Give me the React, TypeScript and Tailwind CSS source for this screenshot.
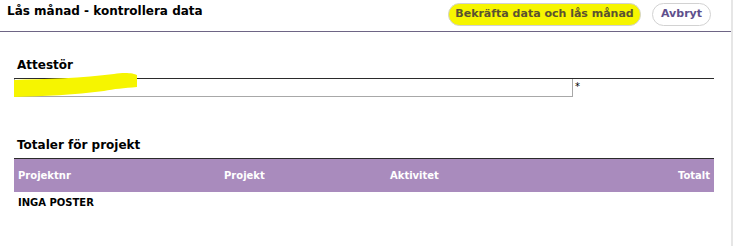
import React from "react";

const FONT = { fontFamily: '"DejaVu Sans", Verdana, sans-serif' };

export default function App() {
  return (
    <div className="flex h-[246px] w-[736px] bg-white text-black" style={FONT}>
      <div className="w-[731px] shrink-0">
        {/* Header */}
        <div className="flex h-[32px] w-[733px] items-start justify-between border-b border-[#6e6585] pl-[7px] pr-[22px]">
          <h1 className="mt-[3px] text-[12px] font-bold leading-[16px]">Lås månad - kontrollera data</h1>
          <div className="mt-[3px] flex gap-[11px]">
            <button className="h-[23px] w-[193px] rounded-full border border-[#d2d2d2] bg-[#f6f500] text-[11px] font-bold text-[#5b5230]">
              Bekräfta data och lås månad
            </button>
            <button className="h-[23px] w-[59px] rounded-full border border-[#d2d2d2] bg-white text-[11px] font-bold text-[#5e4f8c]">
              Avbryt
            </button>
          </div>
        </div>

        {/* Attestör */}
        <div className="ml-[14px] mt-[26px] w-[700px]">
          <div className="border-b border-[#2b2b2b] pb-[6px] pl-[3px] text-[12px] font-bold leading-[14px]">Attestör</div>
          <div className="flex items-start">
            <div className="relative h-[18px] w-[559px] border border-[#a8a8a8] border-t-0">
              <svg className="absolute left-[-1px] top-[-7px]" width="125" height="25" viewBox="0 0 125 25">
                <path d="M0 8 C30 7 70 6 100 2 C110 0 120 1 123 3 L123 15 C110 16 100 17 90 19 C60 23 30 24 0 25 Z" fill="#f6f500" />
              </svg>
            </div>
            <span className="ml-[2px] mt-[3px] text-[10px] leading-[10px]">*</span>
          </div>
        </div>

        {/* Totaler */}
        <div className="ml-[14px] mt-[41px] w-[700px]">
          <div className="border-b border-[#2b2b2b] pb-[6px] pl-[3px] text-[12px] font-bold leading-[14px]">Totaler för projekt</div>
          <div className="flex h-[33px] items-center bg-[#a98bbd] px-[4px] text-[10px] font-bold text-white">
            <span className="w-[206px]">Projektnr</span>
            <span className="w-[166px]">Projekt</span>
            <span>Aktivitet</span>
            <span className="ml-auto">Totalt</span>
          </div>
          <div className="mt-[5px] pl-[4px] text-[10px] font-bold leading-[12px]">INGA POSTER</div>
        </div>
      </div>
      <div className="w-[2px] bg-[#e6e6e6]" />
    </div>
  );
}
